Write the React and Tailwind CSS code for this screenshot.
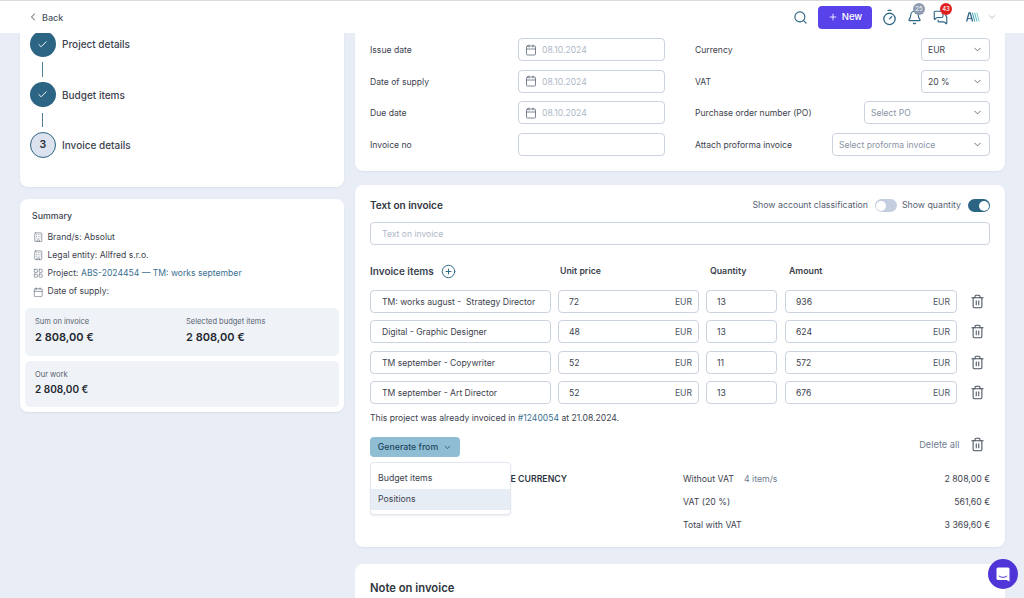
import { Search, Plus, Timer, Bell, MessagesSquare, ChevronDown, ChevronLeft, Check, CirclePlus, Calendar, Building, LayoutGrid, Trash2 } from "lucide-react";

const dates = [
  { label: "Issue date", value: "08.10.2024" },
  { label: "Date of supply", value: "08.10.2024" },
  { label: "Due date", value: "08.10.2024" },
  { label: "Invoice no", value: "" },
];

const selects = [
  { label: "Currency", value: "EUR", width: "w-[69px]", muted: false },
  { label: "VAT", value: "20 %", width: "w-[69px]", muted: false },
  { label: "Purchase order number (PO)", value: "Select PO", width: "w-[126px]", muted: true },
  { label: "Attach proforma invoice", value: "Select proforma invoice", width: "w-[158px]", muted: true },
];

const items = [
  { name: "TM: works august -  Strategy Director", price: "72", qty: "13", amount: "936" },
  { name: "Digital - Graphic Designer", price: "48", qty: "13", amount: "624" },
  { name: "TM september - Copywriter", price: "52", qty: "11", amount: "572" },
  { name: "TM september - Art Director", price: "52", qty: "13", amount: "676" },
];

const totals = [
  { label: "Without VAT", note: "4 item/s", value: "2 808,00 €" },
  { label: "VAT (20 %)", value: "561,60 €" },
  { label: "Total with VAT", value: "3 369,60 €" },
];

function Step({ label, done, number }) {
  return (
    <div className="flex items-center h-[26px]">
      {done ? (
        <div className="flex items-center justify-center w-[25.5px] h-[25.5px] rounded-full bg-[#2c6484]">
          <Check size={11} color="#ffffff" strokeWidth={2} />
        </div>
      ) : (
        <div className="flex items-center justify-center w-[25.5px] h-[25.5px] rounded-full bg-[#dde3ee] border-[1.5px] border-[#2c6484] text-[10.5px] font-semibold text-[#2a303c]">
          {number}
        </div>
      )}
      <span className="ml-[6.5px] pt-px text-[10px] font-medium text-[#3c424e]">{label}</span>
    </div>
  );
}

function Connector() {
  return <div className="ml-[12px] my-[5px] w-[1.25px] h-[14.5px] bg-[#4f8299]" />;
}

function SummaryRow({ icon: Icon, children }) {
  return (
    <div className="flex items-center h-[18.2px] text-[8.6px] text-[#3c424e]">
      <Icon size={10.5} color="#5d6778" strokeWidth={1.4} className="mr-[4px]" />
      <span>{children}</span>
    </div>
  );
}

function Toggle({ on }) {
  return (
    <div className={`flex items-center w-[22px] h-[13px] rounded-full p-[1.5px] ${on ? "bg-[#2c6484] justify-end" : "bg-[#c3cfdf] justify-start"}`}>
      <div className="w-[10px] h-[10px] rounded-full bg-white" />
    </div>
  );
}

function ItemRow({ item }) {
  return (
    <div className="flex items-center h-[23px] text-[8.6px] text-[#3c424e]">
      <div className="flex items-center w-[181px] h-full pt-[2px] px-[11px] border border-[#cbd3df] rounded-[4px] whitespace-pre">{item.name}</div>
      <div className="flex items-center justify-between w-[141px] h-full pt-[2px] ml-[7px] pl-[10px] pr-[6px] border border-[#cbd3df] rounded-[4px]">
        <span>{item.price}</span>
        <span className="text-[#4c5563]">EUR</span>
      </div>
      <div className="flex items-center w-[71px] h-full pt-[2px] ml-[7px] px-[10px] border border-[#cbd3df] rounded-[4px]">{item.qty}</div>
      <div className="flex items-center justify-between w-[172px] h-full pt-[2px] ml-[8px] pl-[10px] pr-[6px] border border-[#cbd3df] rounded-[4px]">
        <span>{item.amount}</span>
        <span className="text-[#4c5563]">EUR</span>
      </div>
      <Trash2 size={15} color="#48525f" strokeWidth={1.7} className="ml-[12.5px]" />
    </div>
  );
}

export default function App() {
  return (
    <div className="relative flex flex-col w-[1024px] h-[598px] overflow-hidden bg-[#e9eef6] font-['Inter',sans-serif]">
      <header className="flex items-center shrink-0 h-[33px] bg-white border-t border-[#dcdcdc] pl-[27px] pr-[27px]">
        <ChevronLeft size={12} color="#4c5563" strokeWidth={2} />
        <span className="ml-[3px] pt-px text-[9px] font-medium text-[#4c5563]">Back</span>
        <Search size={15} color="#2c6484" strokeWidth={1.8} className="ml-auto" />
        <button className="flex items-center justify-center w-[54px] h-[23px] ml-[10.5px] rounded-[4px] bg-[#5843ea] text-white text-[9.5px] font-medium">
          <Plus size={10} strokeWidth={2} className="mr-[4px]" />
          New
        </button>
        <Timer size={17} color="#2c6484" strokeWidth={1.8} className="ml-[9px]" />
        <div className="relative ml-[9px]">
          <Bell size={15} color="#2c6484" strokeWidth={1.8} />
          <div className="absolute -top-[7px] left-[6px] flex items-center justify-center w-[12px] h-[12px] rounded-full bg-[#8d9bb0] text-white text-[6px]">25</div>
        </div>
        <div className="relative ml-[11px]">
          <MessagesSquare size={15} color="#2c6484" strokeWidth={1.8} />
          <div className="absolute -top-[7px] left-[7px] flex items-center justify-center w-[12px] h-[12px] rounded-full bg-[#e02020] text-white text-[6px] font-medium">43</div>
        </div>
        <svg width="14" height="10" viewBox="0 0 14 10" fill="none" className="ml-[18px]">
          <path d="M0.6 9.5 L3 0.8 L4.2 0.8 L6.6 9.5" stroke="#2c6484" strokeWidth="1.3" />
          <path d="M1.8 6.6 H5.4" stroke="#2c6484" strokeWidth="1" />
          <path d="M6.4 0.8 L8.8 9.5" stroke="#3d9aa8" strokeWidth="1" />
          <path d="M8.6 0.8 L11 9.5" stroke="#55b8bc" strokeWidth="1" />
          <path d="M10.8 0.8 L13.2 9.5" stroke="#7fd2cd" strokeWidth="1" />
        </svg>
        <ChevronDown size={10} color="#8b95a5" strokeWidth={1.6} className="ml-[7px]" />
      </header>

      <div className="flex items-start gap-[11px] pl-5">
        <div className="flex flex-col shrink-0 w-[324px]">
          <section className="h-[154px] pl-[10px] bg-white rounded-b-[8px] shadow-[0_1px_2px_rgba(40,60,90,0.08)] overflow-hidden">
            <div className="-mt-[2px]">
              <Step label="Project details" done />
              <Connector />
              <Step label="Budget items" done />
              <Connector />
              <Step label="Invoice details" number="3" />
            </div>
          </section>

          <section className="mt-[12px] h-[213px] p-[5px] bg-white rounded-[8px] shadow-[0_1px_2px_rgba(40,60,90,0.08)]">
            <div className="pl-[7px] pt-[6px] text-[8.75px] font-medium text-[#3c424e]">Summary</div>
            <div className="pl-[8px] mt-[5px]">
              <SummaryRow icon={Building}>Brand/s: Absolut</SummaryRow>
              <SummaryRow icon={Building}>Legal entity: Allfred s.r.o.</SummaryRow>
              <SummaryRow icon={LayoutGrid}>
                Project: <span className="text-[#3a7090]">ABS-2024454 — TM: works september</span>
              </SummaryRow>
              <SummaryRow icon={Calendar}>Date of supply:</SummaryRow>
            </div>
            <div className="flex h-[48px] mt-[7px] px-[10px] pt-[8px] bg-[#eff3f7] rounded-[5px]">
              <div className="w-[151px]">
                <div className="text-[7.5px] text-[#566070]">Sum on invoice</div>
                <div className="mt-[2px] text-[11px] font-semibold text-[#23272f]">2 808,00 €</div>
              </div>
              <div>
                <div className="text-[7.5px] text-[#566070]">Selected budget items</div>
                <div className="mt-[2px] text-[11px] font-semibold text-[#23272f]">2 808,00 €</div>
              </div>
            </div>
            <div className="h-[46px] mt-[5px] px-[10px] pt-[8px] bg-[#eff3f7] rounded-[5px]">
              <div className="text-[7.5px] text-[#566070]">Our work</div>
              <div className="mt-[2px] text-[10px] font-semibold text-[#23272f]">2 808,00 €</div>
            </div>
          </section>
        </div>

        <div className="flex flex-col shrink-0 w-[650px]">
          <section className="grid grid-cols-2 gap-x-[30px] h-[138px] px-[15px] pt-[5px] bg-white rounded-b-[8px] shadow-[0_1px_2px_rgba(40,60,90,0.08)]">
            <div className="flex flex-col gap-[8.5px]">
              {dates.map((row) => (
                <div key={row.label} className="flex items-center justify-between h-[23px]">
                  <span className="pt-[2px] text-[8.6px] text-[#3c424e]">{row.label}</span>
                  <div className="flex items-center w-[147px] h-full pl-[6px] border border-[#cbd3df] rounded-[4px]">
                    {row.value && (
                      <>
                        <Calendar size={12} color="#5d6778" strokeWidth={1.6} />
                        <span className="ml-[5px] pt-[2px] text-[8.6px] text-[#aeb8c7]">{row.value}</span>
                      </>
                    )}
                  </div>
                </div>
              ))}
            </div>
            <div className="flex flex-col gap-[8.5px]">
              {selects.map((row) => (
                <div key={row.label} className="flex items-center justify-between h-[23px]">
                  <span className="pt-[2px] text-[8.6px] text-[#3c424e]">{row.label}</span>
                  <div className={`flex items-center justify-between ${row.width} h-full px-[6px] border border-[#cbd3df] rounded-[4px]`}>
                    <span className={`pt-[2px] text-[8.6px] ${row.muted ? "text-[#8a94a6]" : "text-[#3c424e]"}`}>{row.value}</span>
                    <ChevronDown size={11} color="#4c5563" strokeWidth={1.8} />
                  </div>
                </div>
              ))}
            </div>
          </section>

          <section className="relative mt-[14px] h-[362px] px-[15px] pt-[13px] bg-white rounded-[8px] shadow-[0_1px_2px_rgba(40,60,90,0.08)]">
            <div className="flex items-center h-[15px]">
              <span className="text-[10px] font-semibold text-[#2f3540]">Text on invoice</span>
              <span className="ml-auto pt-px text-[8.75px] text-[#566070]">Show account classification</span>
              <div className="ml-[7px]"><Toggle /></div>
              <span className="ml-[5px] pt-px text-[8.75px] text-[#566070]">Show quantity</span>
              <div className="ml-[7px]"><Toggle on /></div>
            </div>
            <div className="flex items-center h-[23px] mt-[9px] pt-[2px] px-[11px] border border-[#cbd3df] rounded-[4px] text-[8.6px] text-[#aeb8c7]">Text on invoice</div>

            <div className="flex items-center h-[16px] mt-[18px]">
              <div className="flex items-center w-[190px]">
                <span className="text-[10px] font-semibold text-[#3c424e]">Invoice items</span>
                <CirclePlus size={15} color="#2c6484" strokeWidth={1.5} className="ml-[7px]" />
              </div>
              <span className="w-[150px] pt-[2px] text-[8.75px] font-semibold text-[#3c424e]">Unit price</span>
              <span className="w-[79px] pt-[2px] text-[8.75px] font-semibold text-[#3c424e]">Quantity</span>
              <span className="pt-[2px] text-[8.75px] font-semibold text-[#3c424e]">Amount</span>
            </div>

            <div className="flex flex-col gap-[7.3px] mt-[11px]">
              {items.map((item) => (
                <ItemRow key={item.name} item={item} />
              ))}
            </div>

            <div className="flex items-center h-[14px] mt-[7px] pt-[2px] text-[8.6px] text-[#3c424e]">
              <span>This project was already invoiced in <span className="text-[#3a7090]">#1240054</span> at 21.08.2024.</span>
            </div>

            <div className="relative flex items-start h-[20px] mt-[12px]">
              <button className="flex items-center justify-center w-[90px] h-[20px] pt-px rounded-[4px] bg-[#8fbdd4] text-[8.75px] font-medium text-[#20465c]">
                Generate from
                <ChevronDown size={9} strokeWidth={2} className="ml-[5px]" />
              </button>
              <div className="flex items-center h-[16px] ml-auto mr-[5px] text-[9.25px] text-[#6f7b8d]">
                Delete all
                <Trash2 size={15} color="#48525f" strokeWidth={1.7} className="ml-[10.5px]" />
              </div>
              <div className="absolute z-10 left-0 top-[25px] w-[141px] h-[53px] py-[5px] bg-white border border-[#e3e8f0] rounded-[4px] shadow-[0_1px_2px_rgba(40,60,90,0.1)]">
                <div className="flex items-center h-[21px] pt-px px-[7px] text-[8.75px] text-[#3c424e]">Budget items</div>
                <div className="flex items-center h-[21px] pt-px px-[7px] bg-[#e7edf4] text-[8.75px] text-[#3c424e]">Positions</div>
              </div>
            </div>

            <div className="flex mt-[10.5px]">
              <div className="w-[313px]">
                <div className="w-[197px] h-[23px] pt-px flex items-center justify-end text-[8.75px] font-semibold text-[#2f3540] whitespace-nowrap">INVOICE CURRENCY</div>
              </div>
              <div className="flex-1">
                {totals.map((row) => (
                  <div key={row.label} className="flex items-center h-[23px] pt-px text-[8.75px] text-[#3c424e]">
                    <span>{row.label}</span>
                    {row.note && <span className="ml-[10px] text-[#6f7b8d]">{row.note}</span>}
                    <span className="ml-auto">{row.value}</span>
                  </div>
                ))}
              </div>
            </div>
          </section>

          <section className="mt-[17px] h-[120px] px-[15px] pt-[16px] bg-white rounded-t-[8px]">
            <div className="text-[11.25px] font-semibold text-[#2f3540]">Note on invoice</div>
          </section>
        </div>
      </div>

      <div className="absolute right-[6px] bottom-[9px] flex items-center justify-center w-[30px] h-[30px] rounded-full bg-[#4f35d8]">
        <svg width="14" height="15" viewBox="0 0 14 15" fill="none">
          <path d="M2 0.5 H12 A1.5 1.5 0 0 1 13.5 2 V14.5 L10.5 13 H2 A1.5 1.5 0 0 1 0.5 11.5 V2 A1.5 1.5 0 0 1 2 0.5 Z" fill="#ffffff" />
          <path d="M3.2 9.2 C5.5 10.8 8.5 10.8 10.8 9.2" stroke="#4f35d8" strokeWidth="1" strokeLinecap="round" />
        </svg>
      </div>
    </div>
  );
}
